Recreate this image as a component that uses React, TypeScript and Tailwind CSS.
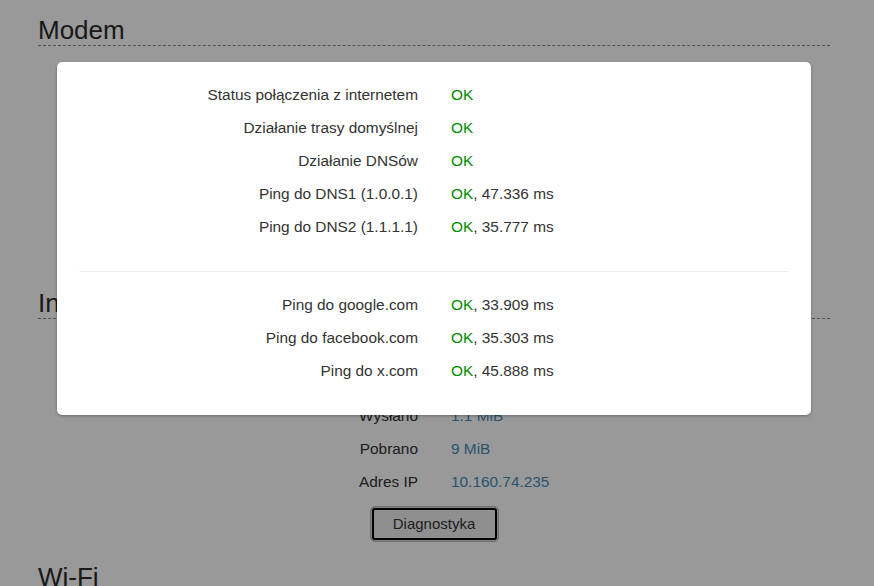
import React from 'react';

type Row = { label: string; value: React.ReactNode };

const OK = <span className="text-[#008a00]">OK</span>;

const internetRows: Row[] = [
  { label: 'Wysłano', value: '1.1 MiB' },
  { label: 'Pobrano', value: '9 MiB' },
  { label: 'Adres IP', value: '10.160.74.235' },
];

const diagRows: Row[] = [
  { label: 'Status połączenia z internetem', value: OK },
  { label: 'Działanie trasy domyślnej', value: OK },
  { label: 'Działanie DNSów', value: OK },
  { label: 'Ping do DNS1 (1.0.0.1)', value: <>{OK}, 47.336 ms</> },
  { label: 'Ping do DNS2 (1.1.1.1)', value: <>{OK}, 35.777 ms</> },
];

const pingRows: Row[] = [
  { label: 'Ping do google.com', value: <>{OK}, 33.909 ms</> },
  { label: 'Ping do facebook.com', value: <>{OK}, 35.303 ms</> },
  { label: 'Ping do x.com', value: <>{OK}, 45.888 ms</> },
];

function Table({ rows, valueClass = '' }: { rows: Row[]; valueClass?: string }) {
  return (
    <div>
      {rows.map((r) => (
        <div key={r.label} className="grid h-[33px] grid-cols-2 items-center">
          <div className="pr-4 text-right whitespace-nowrap">{r.label}</div>
          <div className={`pl-[17px] whitespace-nowrap ${valueClass}`}>{r.value}</div>
        </div>
      ))}
    </div>
  );
}

function Heading({ children, className = '' }: { children: React.ReactNode; className?: string }) {
  return (
    <h2 className={`border-b border-dashed border-[#8a8a8a] text-[26px] leading-[30px] text-[#2b2b2b] ${className}`}>
      {children}
    </h2>
  );
}

export default function App() {
  return (
    <div
      className="relative h-[586px] overflow-hidden bg-white text-[15.4px] text-[#333]"
      style={{ fontFamily: '"Liberation Sans", Arial, sans-serif' }}
    >
      <div className="ml-[38px] w-[792px]">
        <Heading className="pt-[15px]">Modem</Heading>
        {/* modem details sit under the dialog */}
        <div className="h-[242px]" />

        <Heading>Internet</Heading>
        <div className="mt-[14px]">
          <div className="h-[66px]" />
          <Table rows={internetRows} valueClass="text-[#468cb7]" />
        </div>
        <div className="mt-[8px] flex justify-center">
          <button
            type="button"
            className="h-[36px] w-[129px] rounded-[5px] border border-[#b8b8b8] bg-[#efefef] text-[15px] text-[#333] shadow-[inset_0_0_0_1px_#dcdcdc,inset_0_0_0_3px_#000]"
          >
            Diagnostyka
          </button>
        </div>

        <Heading className="mt-[20px]">Wi-Fi</Heading>
      </div>

      {/* overlay + dialog */}
      <div className="absolute inset-0 bg-black/40">
        <div className="absolute left-[57px] top-[62px] w-[754px] rounded-[5px] bg-white px-[22px] pt-4 pb-[28px] shadow-[0_1px_3px_rgba(0,0,0,0.3)]">
          <Table rows={diagRows} />
          <hr className="mt-[28px] mb-4 border-0 border-t border-[#eeeeee]" />
          <Table rows={pingRows} />
        </div>
      </div>
    </div>
  );
}
